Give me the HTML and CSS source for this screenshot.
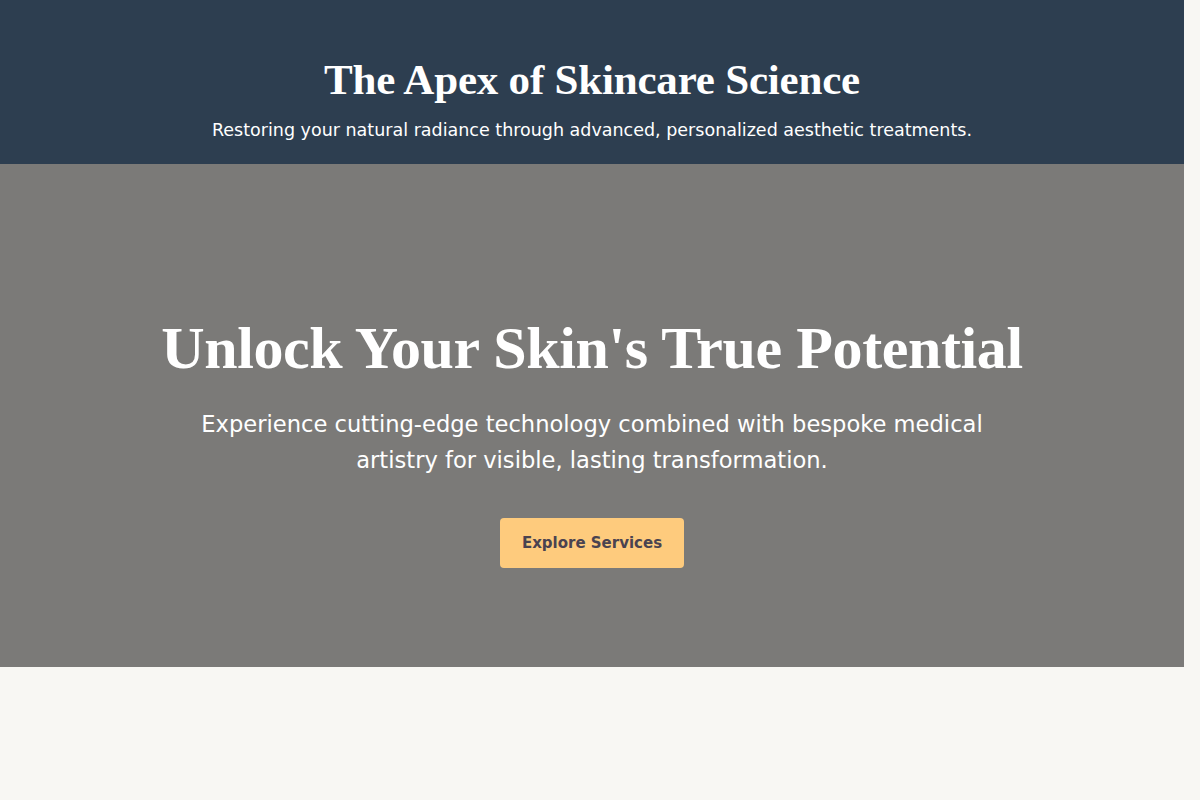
FILE: index.html
```html
<!DOCTYPE html>
<html lang="en">
<head>
<meta charset="utf-8">
<title>The Apex of Skincare Science</title>
<link rel="stylesheet" href="styles.css">
</head>
<body>
<div class="page">
  <header class="site-header">
    <h1 class="site-title">The Apex of Skincare Science</h1>
    <p class="site-tagline">Restoring your natural radiance through advanced, personalized aesthetic treatments.</p>
  </header>
  <section class="hero">
    <h2 class="hero-title">Unlock Your Skin's True Potential</h2>
    <p class="hero-text">Experience cutting-edge technology combined with bespoke medical artistry for visible, lasting transformation.</p>
    <a class="hero-button" href="#">Explore Services</a>
  </section>
</div>
</body>
</html>
```
FILE: styles.css
```css
html, body {
  margin: 0;
  padding: 0;
  background: #f8f7f3;
}
body {
  font-family: "DejaVu Sans", sans-serif;
  color: #ffffff;
}
.page {
  margin-right: 16px;
}
.site-header {
  background: #2d3e50;
  height: 164px;
  box-sizing: border-box;
  padding-top: 54px;
  text-align: center;
}
.site-title {
  margin: 0;
  font-family: "Liberation Serif", serif;
  font-weight: 700;
  font-size: 43px;
  letter-spacing: -0.2px;
  line-height: 52px;
}
.site-tagline {
  margin: 12px 0 0;
  font-size: 17.5px;
  line-height: 24px;
}
.hero {
  background: #7b7a78;
  height: 503px;
  box-sizing: border-box;
  padding-top: 148px;
  display: flex;
  flex-direction: column;
  align-items: center;
  text-align: center;
}
.hero-title {
  margin: 0;
  font-family: "Liberation Serif", serif;
  font-weight: 700;
  font-size: 60px;
  letter-spacing: -0.4px;
  line-height: 72px;
}
.hero-text {
  margin: 22px 0 0;
  max-width: 820px;
  font-size: 22.6px;
  line-height: 36px;
}
.hero-button {
  margin-top: 40px;
  display: inline-block;
  background: #fecb7d;
  color: #4a4350;
  text-decoration: none;
  font-size: 15px;
  font-weight: 600;
  padding: 16px 22px;
  border-radius: 4px;
}
```
